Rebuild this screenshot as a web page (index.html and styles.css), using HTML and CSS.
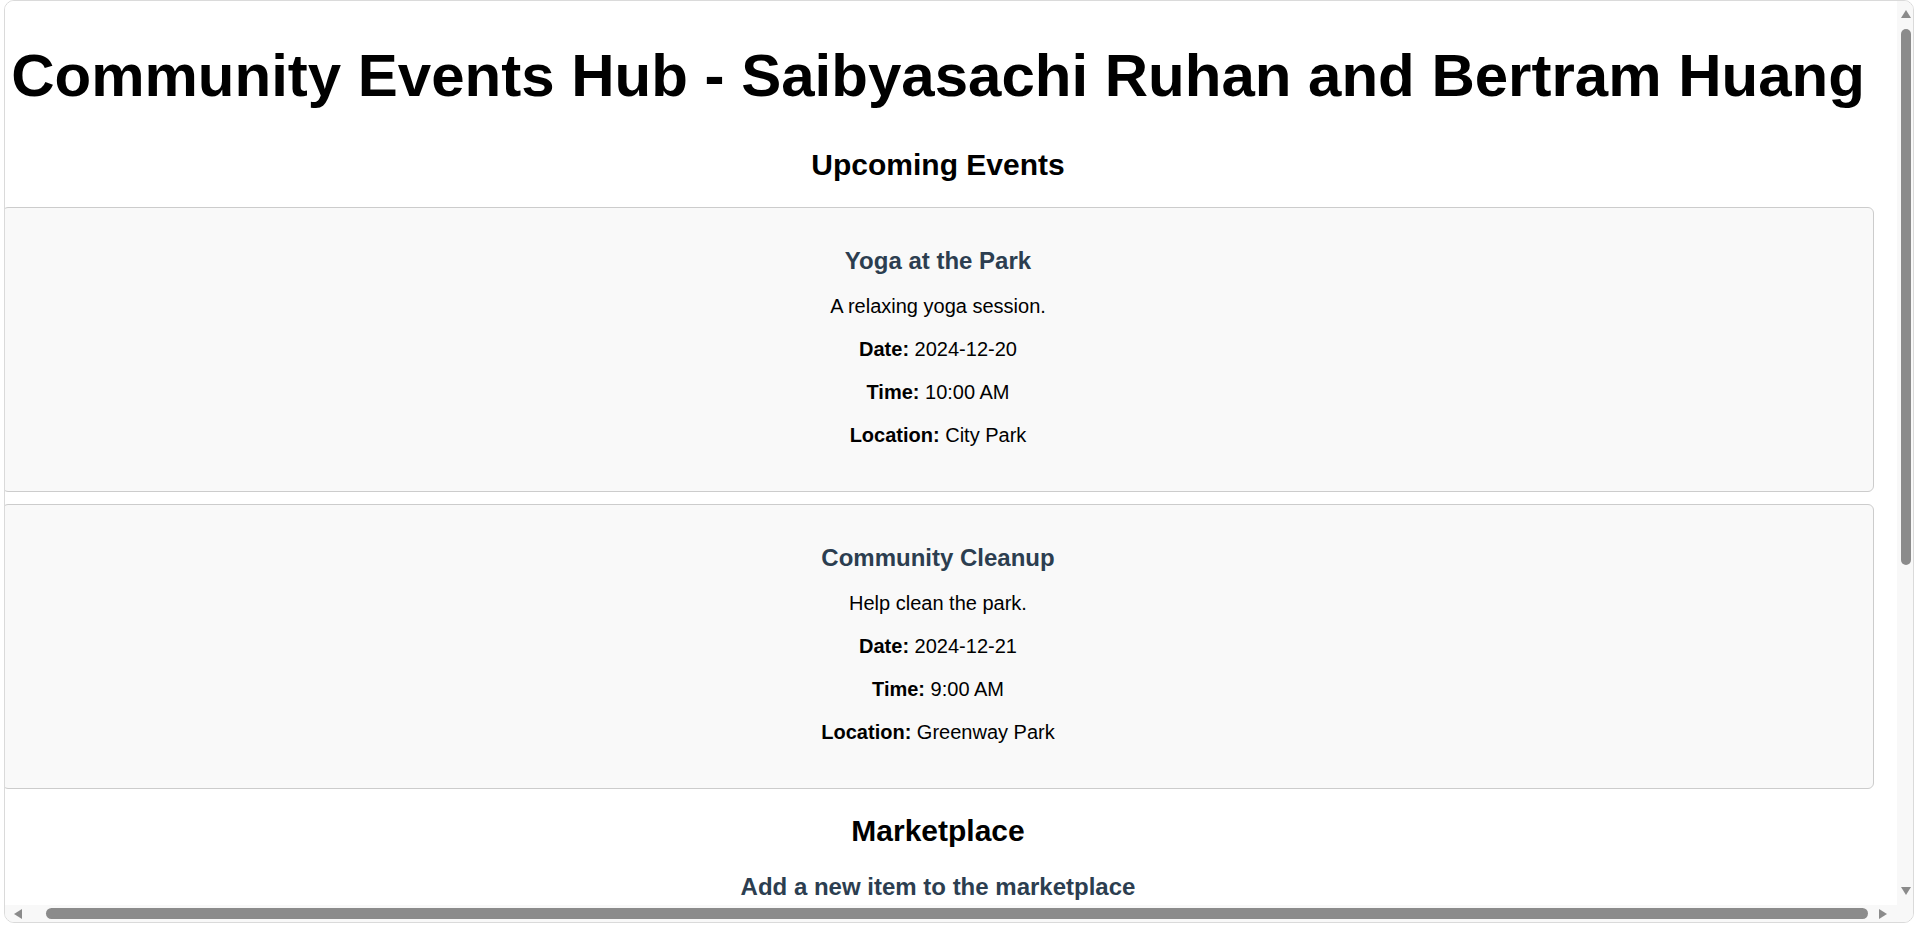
FILE: index.html
```html
<!DOCTYPE html>
<html lang="en">
<head>
<meta charset="utf-8">
<title>Community Events Hub</title>
<link rel="stylesheet" href="styles.css">
</head>
<body>
<div class="window">
  <div class="viewport">
    <div class="page">
      <h1 class="title">Community Events Hub - Saibyasachi Ruhan and Bertram Huang</h1>
      <h2 class="section-title">Upcoming Events</h2>
      <div class="card">
        <h3 class="card-title">Yoga at the Park</h3>
        <p class="line">A relaxing yoga session.</p>
        <p class="line"><strong>Date:</strong> 2024-12-20</p>
        <p class="line"><strong>Time:</strong> 10:00 AM</p>
        <p class="line"><strong>Location:</strong> City Park</p>
      </div>
      <div class="card">
        <h3 class="card-title">Community Cleanup</h3>
        <p class="line">Help clean the park.</p>
        <p class="line"><strong>Date:</strong> 2024-12-21</p>
        <p class="line"><strong>Time:</strong> 9:00 AM</p>
        <p class="line"><strong>Location:</strong> Greenway Park</p>
      </div>
      <h2 class="section-title">Marketplace</h2>
      <h3 class="sub-title">Add a new item to the marketplace</h3>
      <form class="market-form">
        <input class="field" type="text" placeholder="Item name">
        <input class="field" type="text" placeholder="Price">
        <button class="btn" type="button">Add Item</button>
      </form>
    </div>
  </div>
  <div class="vscroll">
    <span class="arrow arrow-up"></span>
    <span class="vthumb"></span>
    <span class="vspacer"></span>
    <span class="arrow arrow-down"></span>
  </div>
  <div class="hscroll">
    <span class="arrow arrow-left"></span>
    <span class="hthumb"></span>
    <span class="arrow arrow-right"></span>
  </div>
  <div class="corner"></div>
</div>
</body>
</html>
```

FILE: styles.css
```css
html, body {
  margin: 0;
  padding: 0;
  background: #ffffff;
}

body {
  font-family: "Liberation Sans", Arial, sans-serif;
  color: #000000;
  width: 1917px;
  height: 926px;
  overflow: hidden;
}

.window {
  box-sizing: border-box;
  margin-left: 4px;
  width: 1910px;
  height: 923px;
  border: 1px solid #dadada;
  border-radius: 10px;
  overflow: hidden;
  display: grid;
  grid-template-columns: 1892px 16px;
  grid-template-rows: 904px 17px;
  background: #ffffff;
}

.viewport {
  overflow: hidden;
  background: #ffffff;
}

.page {
  width: 1872px;
  margin-left: -3px;
}

.title {
  font-size: 60px;
  font-weight: bold;
  text-align: center;
  white-space: nowrap;
  margin: 40px 0 38px;
}

.section-title {
  font-size: 30px;
  font-weight: bold;
  text-align: center;
  margin: 25px 0;
}

.card {
  background: #f9f9f9;
  border: 1px solid #cccccc;
  border-radius: 6px;
  padding: 15.5px 20px 24px;
  margin: 12px 0;
  text-align: center;
}

.card-title {
  font-size: 24px;
  font-weight: bold;
  color: #2c3e50;
  margin: 23.5px 0 10px;
}

.line {
  font-size: 20px;
  margin: 20px 0;
}

.sub-title {
  font-size: 24px;
  font-weight: bold;
  color: #2c3e50;
  text-align: center;
  margin: 25px 0 20px;
}

.market-form {
  display: flex;
  flex-direction: column;
  align-items: center;
  gap: 12px;
}

.field {
  font-size: 20px;
  padding: 8px;
  width: 400px;
}

.btn {
  font-size: 20px;
  padding: 10px 20px;
}

/* scrollbars */
.vscroll {
  background: #f8f8f8;
  display: flex;
  flex-direction: column;
  align-items: center;
  padding: 9px 0 10px 1px;
  box-sizing: border-box;
}

.vthumb {
  width: 10px;
  height: 536px;
  margin-top: 11px;
  background: #8b8b8b;
  border-radius: 5px;
}

.vspacer {
  flex: 1;
}

.hscroll {
  background: #f8f8f8;
  display: flex;
  align-items: center;
  padding: 0 10px 0 9px;
  box-sizing: border-box;
}

.hthumb {
  flex: 1;
  height: 11px;
  margin: 0 11px 0 24px;
  background: #8b8b8b;
  border-radius: 5.5px;
}

.corner {
  background: #f8f8f8;
}

.arrow {
  display: block;
  width: 0;
  height: 0;
}

.arrow-up {
  border-left: 5.5px solid transparent;
  border-right: 5.5px solid transparent;
  border-bottom: 8px solid #8b8b8b;
}

.arrow-down {
  border-left: 5.5px solid transparent;
  border-right: 5.5px solid transparent;
  border-top: 8px solid #8b8b8b;
}

.arrow-left {
  border-top: 5.5px solid transparent;
  border-bottom: 5.5px solid transparent;
  border-right: 8px solid #8b8b8b;
}

.arrow-right {
  border-top: 5.5px solid transparent;
  border-bottom: 5.5px solid transparent;
  border-left: 8px solid #8b8b8b;
}
```
